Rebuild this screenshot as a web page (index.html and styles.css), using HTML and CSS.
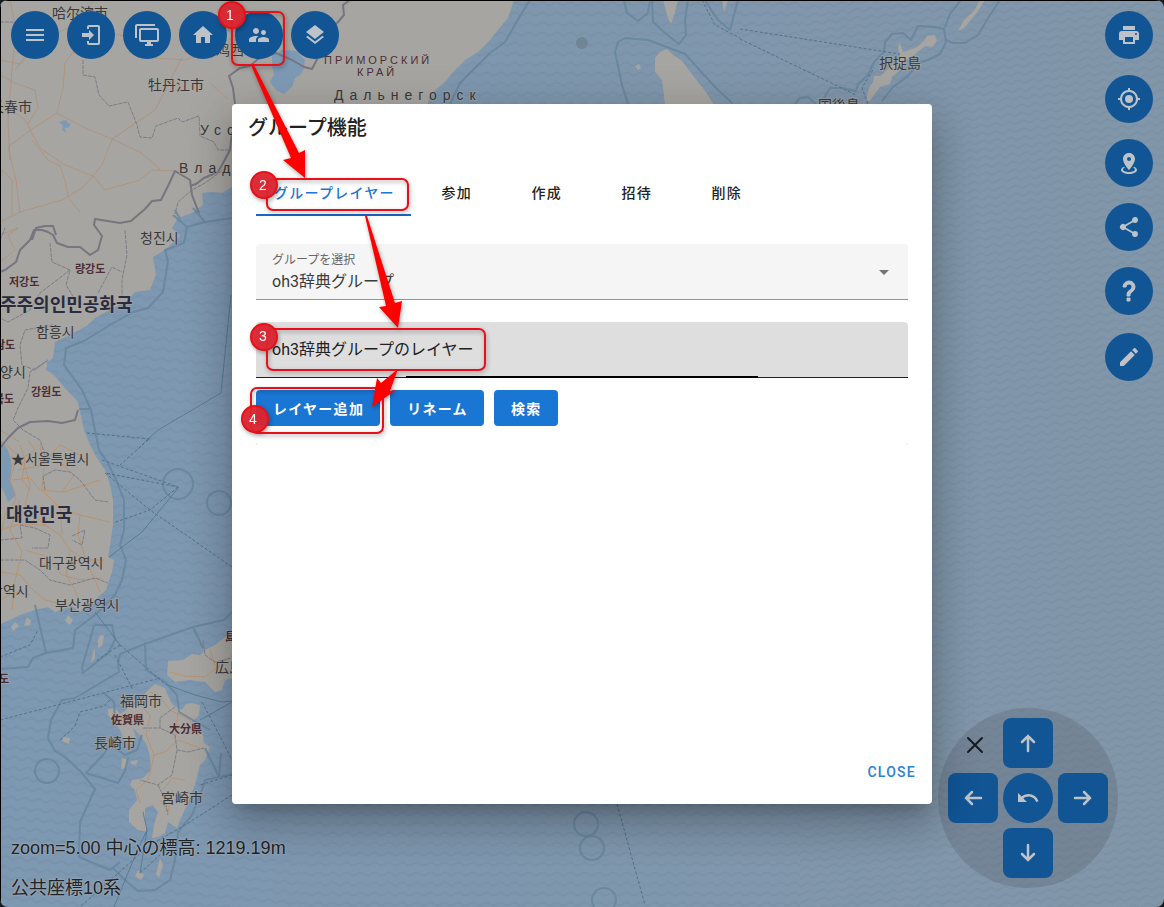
FILE: index.html
```html
<!DOCTYPE html>
<html lang="ja">
<head>
<meta charset="utf-8">
<title>グループ機能</title>
<link rel="stylesheet" href="styles.css">
</head>
<body>
<div class="app">
  <svg class="map" aria-hidden="true">
    <defs>
      <pattern id="waveL" width="14" height="10" patternUnits="userSpaceOnUse" patternTransform="rotate(5)"><path class="wave" d="M0 4q3.500 3 7 0t7 0"/></pattern>
      <pattern id="waveM" width="14" height="10" patternUnits="userSpaceOnUse"><path class="wave" d="M0 4q3.500 3 7 0t7 0"/></pattern>
      <pattern id="waveR" width="14" height="8" patternUnits="userSpaceOnUse" patternTransform="rotate(-6)"><path class="wave" d="M0 4q3.500 3 7 0t7 0"/></pattern>
      <linearGradient id="sea" x1="0" x2="1" y1="0" y2="0"><stop offset="0" stop-color="#7d98b2"/><stop offset=".55" stop-color="#7f97ad"/><stop offset="1" stop-color="#8296a9"/></linearGradient>
    </defs>
    <rect width="100%" height="100%" fill="url(#sea)"/>
    <rect width="300" height="100%" fill="url(#waveL)"/>
    <rect x="300" width="500" height="100%" fill="url(#waveM)"/>
    <rect x="800" width="100%" height="100%" fill="url(#waveR)"/>

    <g class="coast">
      <path d="M514 0 508 18 502 25 490 40 478 52 465 60 453 72 445 82 432 93 425 110 232 187 222 193 212 192 202 193 203 205 192 213 178 218 172 228 180 236 165 250 153 257 156 275 150 290 135 292 128 300 110 310 95 318 88 325 70 335 55 342 53 358 48 362 46 370 54 375 65 388 78 402 84 430 90 445 97 458 105 470 110 485 113 500 113 525 110 545 108 557 114 560 112 572 106 590 95 600 80 612 72 606 55 612 48 607 35 610 20 615 10 620 0 624V0Z"/>
      <path d="M240 626 228 635 215 645 205 650 200 655 192 654 183 660 168 661 167 675 175 682 190 680 205 682 215 692 222 690 225 680 240 676Z"/>
      <path d="M148 690 155 684 165 688 169 698 173 705 182 710 186 704 192 703 200 705 199 715 192 722 203 735 204 743 210 747 205 760 200 765 195 785 187 805 180 820 177 828 168 822 165 833 158 837 152 838 154 825 158 812 153 805 145 808 145 820 147 832 138 830 129 822 129 810 137 800 135 790 130 785 132 780 143 778 151 770 150 757 147 745 140 735 133 728 136 738 131 745 124 740 120 730 114 722 108 715 108 709 115 708 120 714 126 710 130 700 140 700Z"/>
      <path d="M100 635 104 636 102 646 98 648 98 640ZM95 648 95 658 91 663 93 652ZM64 737 70 738 69 744 62 741ZM122 758 128 760 127 768 121 769ZM131 761 138 760 136 765 131 764ZM138 870 144 875 141 880 135 876ZM160 858 163 865 159 878 156 874ZM27 617 31 620 30 625 24 626ZM15 622 19 626 13 631 11 627ZM68 615 73 620 70 625 65 621Z"/>
      <path d="M663 0 668 18 671 24 675 12 678 0ZM722 0 724 12 728 0ZM665 104 662 80 655 72 655 58 660 52 667 49 672 54 682 61 695 78 706 92 716 108ZM635 66 639 64 641 68 638 70Z"/>
      <path d="M898 47 900 43 903 52 909 50 917 47 924 41 927 36 935 35 937 41 932 47 925 46 920 50 914 55 904 61 904 67 892 77 890 84 880 87 874 95 870 101 866 100 869 88 873 82 874 76 880 76 887 70 894 63 900 58ZM980 0 974 11 964 20 958 31 964 28 975 15 980 8 985 0Z"/>
    </g>
    <g class="lake">
      <path d="M272 55 282 50 296 51 305 60 304 69 300 75 295 78 292 87 284 94 276 90 270 82 274 74 272 66Z"/>
      <path d="M59 122 66 120 68 123 71 124 69 127 65 128 66 133 62 130 63 126Z"/>
      <path d="M0 440 8 450 12 465 10 480 16 495 8 502 4 492 0 485ZM46 358 53 366 66 366 63 372 48 370Z"/>
    </g>
    <g class="road">
      <path d="M0 60 20 64 42 42 67 28 91 27 130 38 155 58 185 60 215 50 245 28M91 27 65 63 63 88 57 113 35 127 8 147M57 113 85 128 112 139 102 165 93 176 82 188 62 200 20 212 0 222M112 139 155 110 168 85 182 57M93 176 65 165 40 148 25 120 5 105M93 176 105 190 140 180 152 170 175 171M112 139 140 152 160 169M32 140 48 160 60 166 65 180 68 197 80 212M8 147 16 180 20 212M0 75 15 83 35 90 38 108 28 124M10 0 16 30 12 70 8 120 10 160M0 262 15 250 8 235 18 228 0 235M67 10 80 12 95 0M210 83 228 99M50 42 30 50 15 70M0 168 12 180 12 215"/>
      <path class="road2" d="M0 440 18 455 10 480 16 500 5 515 0 540M10 457 24 463 30 485 25 505 45 525 60 535 70 550 86 560 105 560M18 470 40 466 60 445 80 455M12 480 30 478 40 490 64 492 100 480M40 445 44 466 42 490 60 508 62 535M20 500 10 530 22 552 15 580 12 610M60 508 80 515 110 522M0 572 20 575 33 590 45 600 58 603M25 550 45 556 62 575 80 580 102 578M70 550 66 575 75 590 80 603M5 460 22 458 35 450 28 440M60 462 74 475 62 492M20 445 25 460 22 480 30 490M45 525 20 524 0 530M80 515 78 535 86 560 100 592M0 600 15 592 30 595"/>
      <path class="road2" d="M170 672 184 676 205 677 220 665 232 655M210 650 215 665 225 672M150 692 160 697 170 710 190 720 195 730M140 705 150 715 146 735 154 755 148 780 136 790 140 803M154 755 165 752 178 740 200 748M178 712 175 740M163 790 172 778 185 780M160 800 168 812 172 790M112 713 125 722 143 712M0 430 20 442"/>
    </g>
    <g class="admin">
      <path d="M83 60 83 75 95 77 99 95 109 106 128 102 137 125 140 137 152 138 156 126 178 118 182 122 199 116 200 136 214 142 218 150 230 150M0 22 12 22 25 30 45 28M230 165 205 183 192 190 178 202 175 214M0 240 5 228M50 243 52 262 70 270 66 285 77 303M125 230 127 255 122 280 122 297M98 293 105 280 112 267 122 272M70 270 40 293 30 310 8 322 0 318M53 325 25 330 20 345 22 365 35 370 48 360M45 362 30 372 28 388 18 408 13 420 23 430 40 440 45 455M45 490 43 476 55 470 70 472 80 480 95 500 108 502M0 540 22 538 20 525 35 528 50 535 48 548 32 548M72 536 85 530 82 545 72 540M0 560 25 560 40 570 50 580 70 585 95 578 108 583M203 640 205 655 215 662 232 658M175 707 160 718 160 728 175 735 177 750 188 752 204 748M177 750 172 775 158 785 140 780M143 728 160 728M158 785 165 800 168 815"/>
    </g>
    <g class="border">
      <path d="M350 0 343 5 344 15 338 22 330 30 324 46 312 69 304 67 292 60 276 53 258 59 250 66 240 68 229 76 233 88 235 104M232 132 230 150 222 165 218 172 204 178 196 184 190 186M199 213 192 195 190 180 175 171 168 186 161 200 152 201 145 209 131 221 120 223 95 219 94 225 102 236 98 250 90 255 80 247 68 247 57 243 53 235 48 232 42 230 34 230 30 240 20 250 16 262 5 270 0 272M32 240 36 228 45 226 53 226 56 235M78 410 75 420 62 423 48 421 30 422 18 428 8 438 0 448"/>
    </g>
    <g class="marine">
      <path d="M530 0 520 16 505 42 490 53 475 68 460 83 450 104M173 215 187 227 205 222 232 218M187 227 184 243 165 250 168 261 163 292 148 308 133 312 110 325 84 341 66 348 64 365 72 376 82 390 91 410 99 450 108 463 117 482 124 500 124 530 120 545 126 560 122 580 115 595M79 409 90 409M180 219 175 210M193 208 206 223"/>
      <path d="M115 595 95 615 75 630 73 648 46 653 33 658M35 605 46 653M33 658 28 667 0 669M95 625 112 625 115 640 108 653 83 673 82 667 90 640 94 625M118 663 120 654 145 644 193 627 224 620 232 612M193 627 203 648M145 642 146 670 165 682 177 695 179 712M118 663 119 672 75 698 62 700 51 720 48 738 55 751 65 757 81 772 95 789 80 822 79 857 110 870 120 862M86 773 103 755 118 735M86 773 118 783 125 771 128 758M104 693 114 702 115 722M142 735 137 750 125 755 115 748M179 712 210 730M205 748 219 777 221 753M221 777 232 774M219 777 205 780 202 790 192 815 178 832 175 860 170 880 155 890 138 891 125 880 112 867"/>
      <path d="M624 0 627 13 638 21 648 13 650 0M652 0 653 22 665 33 679 44 686 35 685 20 688 0M628 104 622 85 615 52 618 42 625 38 648 40 685 54 696 66 715 87 733 104M738 0 730 30 718 20 710 8 705 0"/>
      <path d="M961 0 950 14 944 29 935 27 918 26 911 40 903 33 892 34 885 42 884 52 874 62 868 75 858 84 856 91 843 88 830 88 824 98M944 29 946 42 940 54 928 60 918 63 908 76 900 82 893 87 882 101M1000 0 990 15 978 35 965 43 952 43 945 39M795 104 800 98 808 97 816 104"/>
      <circle cx="178" cy="484" r="15"/><circle cx="219" cy="503" r="12"/><circle cx="47" cy="771" r="12"/><circle cx="586" cy="824" r="12"/><circle cx="592" cy="848" r="12"/><circle cx="604" cy="900" r="12"/>
      <path class="ferry-solid" d="M231 295 221 393 158 430 148 439M179 487 142 532 109 557M165 684 195 695 222 702 232 701M200 720 232 702M143 812 147 830 135 856 114 907M147 830 140 873M95 612 120 645"/>
    </g>
    <g class="ferry">
      <path d="M148 439 137 450M87 433 150 439M102 460 178 487 105 473M148 440 120 465M105 473 150 510 232 567M178 487 150 510 113 523M0 720 160 678M120 645 165 684M115 655 133 690 M75 726 80 712 104 706 110 700M60 740 75 726M0 657 30 645 38 630M120 645 96 661M202 702 222 740 232 760M232 775 200 785M232 795 185 825 150 845 80 907M140 873 160 855M617 804 645 905M740 29 900 54M740 39 856 95M868 104 862 88 874 68M702 0 715 25 740 38"/>
    </g>
    <circle cx="582" cy="43" r="6" fill="#708595"/>
    <g class="city">
      <text x="52" y="18">哈尔滨市</text><text x="148" y="90">牡丹江市</text><text x="-10" y="112">长春市</text><text x="216" y="55">鸡西市</text>
      <text x="140" y="243">청진시</text><text x="36" y="337">함흥시</text><text x="0" y="377">양시</text><text x="11" y="464">★서울특별시</text>
      <text x="39" y="568">대구광역시</text><text x="-10" y="596">광역시</text><text x="55" y="610">부산광역시</text>
      <text x="215" y="672">広島市</text><text x="120" y="706">福岡市</text><text x="94" y="748">長崎市</text><text x="161" y="803">宮崎市</text>
      <text x="879" y="68">択捉島</text><text x="818" y="110">国後島</text>
      <text class="wide" x="200" y="135">Усс</text><text class="wide" x="179" y="173">Влад</text><text class="wide" x="334" y="100">Дальнегорск</text>
    </g>
    <g class="region">
      <text x="75" y="273">량강도</text><text x="9" y="286">저강도</text><text x="-5" y="349">남도</text><text x="-6" y="403">북도</text><text x="31" y="396">강원도</text><text x="-1" y="683">도</text>
      <text x="111" y="724">佐賀県</text><text x="169" y="733">大分県</text><text x="225" y="641">島</text>
      <text class="spread" x="324" y="64">ПРИМОРСКИЙ</text><text class="spread" x="357" y="76">КРАЙ</text>
    </g>
    <g class="country"><text x="0" y="311">주주의인민공화국</text><text x="6" y="521">대한민국</text></g>
    <rect class="edge" width="100%" height="1"/><rect class="edge" width="1" height="100%"/>
  </svg>

  <nav class="toolbar">
    <button class="round" aria-label="メニュー"><svg viewBox="0 0 24 24"><path d="M3 6h18v2H3zM3 11h18v2H3zM3 16h18v2H3z"/></svg></button>
    <button class="round" aria-label="ログイン"><svg viewBox="0 0 24 24"><path d="M10 17v-3H3v-4h7V7l5 5-5 5M10 2h9a2 2 0 0 1 2 2v16a2 2 0 0 1-2 2h-9a2 2 0 0 1-2-2v-2h2v2h9V4h-9v2H8V4a2 2 0 0 1 2-2z"/></svg></button>
    <button class="round" aria-label="画面"><svg viewBox="0 0 24 24"><path d="M22 17V7H6v10h16m0-12a2 2 0 0 1 2 2v10a2 2 0 0 1-2 2h-6v2h2v2h-8v-2h2v-2H6a2 2 0 0 1-2-2V7a2 2 0 0 1 2-2h16M2 3v12H0V3a2 2 0 0 1 2-2h18v2H2z"/></svg></button>
    <button class="round" aria-label="ホーム"><svg viewBox="0 0 24 24"><path d="M10 20v-6h4v6h5v-8h3L12 3 2 12h3v8z"/></svg></button>
    <button class="round" aria-label="グループ"><svg viewBox="0 0 24 24"><path d="M16.500 12c1.380 0 2.490-1.120 2.490-2.500S17.880 7 16.500 7 14 8.120 14 9.500s1.120 2.500 2.500 2.500zM9 11c1.660 0 2.990-1.340 2.990-3S10.660 5 9 5 6 6.340 6 8s1.340 3 3 3zm7.500 3c-1.830 0-5.500.920-5.500 2.750V19h11v-2.250c0-1.830-3.670-2.750-5.500-2.750zM9 13c-2.330 0-7 1.170-7 3.500V19h7v-2.250c0-.850.330-2.340 2.370-3.470C10.500 13.100 9.660 13 9 13z"/></svg></button>
    <button class="round" aria-label="レイヤー"><svg viewBox="0 0 24 24"><path d="M12 16l7.360-5.730L21 9l-9-7-9 7 1.630 1.270M12 18.540l-7.380-5.730L3 14.070l9 7 9-7-1.630-1.270z"/></svg></button>
  </nav>

  <aside class="rail">
    <div class="rail-group">
      <button class="round" aria-label="印刷"><svg viewBox="0 0 24 24"><path d="M18 3H6v4h12M19 12a1 1 0 0 1 0-2 1 1 0 0 1 0 2M16 19H8v-5h8M19 8H5a3 3 0 0 0-3 3v6h4v4h12v-4h4v-6a3 3 0 0 0-3-3z"/></svg></button>
      <button class="round" aria-label="現在地"><svg viewBox="0 0 24 24"><path d="M12 8a4 4 0 0 1 0 8 4 4 0 0 1 0-8M3.050 13H1v-2h2.050C3.500 6.830 6.830 3.500 11 3.050V1h2v2.050c4.170.450 7.500 3.780 7.950 7.950H23v2h-2.050c-.450 4.170-3.780 7.500-7.950 7.950V23h-2v-2.050C6.830 20.500 3.500 17.170 3.050 13M12 5a7 7 0 0 0 0 14 7 7 0 0 0 0-14z"/></svg></button>
      <button class="round" aria-label="地点"><svg viewBox="0 0 24 24"><path d="M12 2c3.310 0 6 2.660 6 5.950C18 12.410 12 19 12 19S6 12.410 6 7.950C6 4.660 8.690 2 12 2m0 4a2 2 0 0 0 0 4 2 2 0 0 0 0-4m8 13c0 2.210-3.580 4-8 4s-8-1.790-8-4c0-1.290 1.220-2.440 3.110-3.170l.640.910C6.670 17.190 6 17.810 6 18.500 6 19.880 8.690 21 12 21s6-1.120 6-2.500c0-.690-.670-1.310-1.750-1.760l.640-.910C18.780 16.560 20 17.710 20 19z"/></svg></button>
      <button class="round" aria-label="共有"><svg viewBox="0 0 24 24"><path d="M18 16.080c-.760 0-1.440.300-1.960.770L8.910 12.700c.050-.230.090-.460.090-.700s-.040-.470-.090-.700l7.050-4.110A3 3 0 1 0 15 5c0 .240.040.470.090.700L8.040 9.810a3 3 0 1 0 0 4.380l7.120 4.160c-.050.210-.080.430-.080.650a2.920 2.920 0 1 0 2.920-2.920z"/></svg></button>
      <button class="round" aria-label="ヘルプ"><svg class="bold" viewBox="0 0 24 24"><path d="M10 19h3v3h-3v-3M12 2c5.350.220 7.680 5.620 4.500 9.670-.830 1-2.170 1.660-2.830 2.500C13 15 13 16 13 17h-3c0-1.670 0-3.080.670-4.080.660-1 2-1.590 2.830-2.250C15.920 8.430 15.320 5.260 12 5a3 3 0 0 0-3 3H6a6 6 0 0 1 6-6z"/></svg></button>
    </div>
    <button class="round" aria-label="描画"><svg viewBox="0 0 24 24"><path d="M20.710 7.040c.390-.390.390-1.040 0-1.410l-2.340-2.340c-.370-.390-1.020-.390-1.410 0l-1.840 1.830 3.750 3.750M3 17.250V21h3.750L17.810 9.930l-3.750-3.750z"/></svg></button>
  </aside>

  <div class="pad">
    <button class="pad-close" aria-label="閉じる"><svg viewBox="0 0 24 24"><path d="M5 5l14 14M19 5L5 19"/></svg></button>
    <button class="key up" aria-label="上"><svg viewBox="0 0 24 24"><path d="M12 20V5M6 11l6-6 6 6"/></svg></button>
    <button class="key left" aria-label="左"><svg viewBox="0 0 24 24"><path d="M20 12H5M11 6l-6 6 6 6"/></svg></button>
    <button class="key undo" aria-label="元に戻す"><svg viewBox="0 0 24 24"><path d="M12.500 8c-2.650 0-5.050.990-6.900 2.600L2 7v9h9l-3.620-3.620c1.390-1.160 3.160-1.880 5.120-1.880 3.540 0 6.550 2.310 7.600 5.500l2.370-.780C21.080 11.030 17.150 8 12.500 8z"/></svg></button>
    <button class="key right" aria-label="右"><svg viewBox="0 0 24 24"><path d="M4 12h15M13 6l6 6-6 6"/></svg></button>
    <button class="key down" aria-label="下"><svg viewBox="0 0 24 24"><path d="M12 4v15M6 13l6 6 6-6"/></svg></button>
  </div>

  <div class="status"><span>zoom=5.00 中心の標高: 1219.19m</span><span>公共座標10系</span></div>

  <main class="dialog" role="dialog" aria-labelledby="title">
    <h1 id="title">グループ機能</h1>
    <div class="body">
      <div class="tabs" role="tablist">
        <button class="tab active" role="tab" aria-selected="true">グループレイヤー</button><button class="tab" role="tab">参加</button><button class="tab" role="tab">作成</button><button class="tab" role="tab">招待</button><button class="tab" role="tab">削除</button>
      </div>
      <div class="field">
        <label for="group">グループを選択</label>
        <select id="group"><option>oh3辞典グループ</option></select>
        <svg class="caret" viewBox="0 0 24 24"><path d="M7 10l5 5 5-5z"/></svg>
      </div>
      <div class="field focused"><input type="text" aria-label="レイヤー" value="oh3辞典グループのレイヤー"></div>
      <div class="actions"><button class="btn">レイヤー追加</button><button class="btn">リネーム</button><button class="btn">検索</button></div>
      <div class="list-end"></div>
    </div>
    <footer><button class="close">CLOSE</button></footer>
  </main>

  <svg class="notes">
    <g class="frame"><rect x="232" y="12" width="52" height="53" rx="6"/><rect x="267" y="179" width="141" height="31" rx="6"/><rect x="267" y="329" width="218" height="41" rx="6"/><rect x="251" y="388" width="132" height="45" rx="6"/></g>
    <g class="arrow"><path d="M251 65h3L299 153l6-3v28L283 160l8-2Z"/><path d="M365 216h2L395 303l7-2-4 27-19-21 7-1Z"/><path d="M398 369 390 391l6-1-24 17 5-29 4 5Z"/></g>
    <g class="badge"><circle cx="232" cy="15" r="13"/><circle cx="264" cy="185" r="13"/><circle cx="264" cy="337" r="13"/><circle cx="255" cy="419" r="13"/></g>
    <g class="num"><text x="230" y="20">1</text><text x="263" y="190">2</text><text x="263" y="341">3</text><text x="253" y="424">4</text></g>
  </svg>
</div>
</body>
</html>
```
FILE: styles.css
```css
* { box-sizing: border-box; }
body { margin: 0; background: #17191b; font-family: Roboto, "Noto Sans CJK JP", sans-serif; }
button, input, select { font: inherit; color: inherit; border: 0; margin: 0; padding: 0; background: none; }
button { cursor: pointer; }
.app { position: relative; min-height: 100vh; display: flex; align-items: center; justify-content: center; padding: 24px; overflow: hidden; }

.map { position: absolute; inset: 0; width: 100%; height: 100%; border-radius: 8px; }
.edge { fill: #000; }
.wave { fill: none; stroke: #70869d; stroke-width: 2; stroke-opacity: .3; }
.coast { fill: #a7a5a1; }
.lake { fill: #7d9ab5; }
.road { fill: none; stroke: #b08a70; stroke-width: 1; stroke-opacity: .65; stroke-linejoin: round; }
.road2 { stroke: #bd8a5c; stroke-opacity: .7; }
.admin { fill: none; stroke: #7d7c85; stroke-width: 1; stroke-dasharray: 4 1; }
.border { fill: none; stroke: #77757f; stroke-width: 2; stroke-linejoin: round; }
.marine { fill: none; stroke: #66859c; stroke-width: 2; stroke-linejoin: round; stroke-opacity: .85; }
.marine .ferry-solid { stroke: #4f7890; stroke-width: 1; }
.ferry { fill: none; stroke: #4f7289; stroke-width: 1; stroke-dasharray: 3 2; }
.map text { font-family: "Noto Sans CJK JP", sans-serif; paint-order: stroke; stroke: #aaa9a5; stroke-opacity: .5; stroke-width: 2px; }
.city text { font-size: 14px; fill: #38383a; }
.city .wide { letter-spacing: 6px; font-family: "Liberation Sans", sans-serif; }
.region text { font-size: 11px; font-weight: 700; fill: #4d2c35; }
.region .spread { letter-spacing: 3px; font-family: "Liberation Sans", sans-serif; font-weight: 400; }
.country text { font-size: 18px; font-weight: 700; fill: #2b2b40; }

.round { display: grid; place-items: center; width: 48px; height: 48px; border-radius: 50%; background: #115595; }
.round svg { width: 24px; height: 24px; fill: #bdc3c9; }
.round .bold { stroke: #bdc3c9; stroke-width: 1; }
.toolbar { position: absolute; top: 11px; left: 11px; display: flex; gap: 8px; }
.rail { position: absolute; top: 11px; right: 11px; display: grid; gap: 18px; }
.rail-group { display: grid; gap: 16px; }

.pad { position: absolute; right: 46px; bottom: 19px; display: grid; grid-template: repeat(3, 50px) / repeat(3, 50px); grid-template-areas: "x up ." "left undo right" ". down ."; gap: 5px; padding: 10px; border-radius: 50%; background: rgba(80, 90, 100, .27); }
.key { display: grid; place-items: center; border-radius: 8px; background: #115595; }
.key svg, .pad-close svg { width: 24px; height: 24px; fill: none; stroke: #bdc3c9; stroke-width: 2.500; stroke-linecap: round; }
.pad-close { grid-area: x; display: grid; place-items: center; padding: 4px 0 0 4px; }
.pad-close svg { stroke: #151b20; stroke-width: 2; }
.up { grid-area: up; }
.left { grid-area: left; }
.right { grid-area: right; }
.down { grid-area: down; }
.undo { grid-area: undo; border-radius: 50%; }
.undo svg { fill: #bdc3c9; stroke: none; }

.status { position: absolute; left: 11px; bottom: 5px; display: grid; gap: 12px; font: 18px/28px "Liberation Sans", "Noto Sans CJK JP", sans-serif; color: #202326; text-shadow: 0 0 2px #a9b2ba, 0 0 2px #a9b2ba; }

.dialog { position: relative; width: 100%; max-width: 700px; min-height: 700px; display: flex; flex-direction: column; border-radius: 4px; background: #fff; color: #212121; box-shadow: 0 11px 15px -7px rgba(0,0,0,.2), 0 24px 38px 3px rgba(0,0,0,.14), 0 9px 46px 8px rgba(0,0,0,.12); }
h1 { margin: 0; padding: 8px 16px; font-size: 20px; line-height: 32px; font-weight: 500; }
.body { flex: 1; padding: 16px 24px; }
.tabs { display: flex; height: 48px; margin-bottom: 28px; }
.tab { min-width: 90px; padding: 2px 16px 0 18px; font-size: 14px; font-weight: 500; letter-spacing: 0.09em; border-bottom: 2px solid transparent; }
.tab.active { color: #1976d2; border-color: #1867c0; }
.field { position: relative; height: 56px; margin-bottom: 22px; border-bottom: 1px solid #949494; border-radius: 4px 4px 0 0; background: #f5f5f5; }
.field label { position: absolute; top: 6px; left: 16px; font-size: 12px; line-height: 20px; color: #666; }
.field select, .field input { display: block; width: 100%; height: 100%; padding: 0 16px 2px; font-size: 16px; outline: 0; appearance: none; }
.field select { padding: 20px 16px 0; color: #3c3c3c; }
.caret { position: absolute; top: 16px; right: 12px; width: 24px; height: 24px; fill: #757575; pointer-events: none; }
.focused { margin-bottom: 12px; border-color: #212121; background: #dedede; }
.focused::after { content: ""; position: absolute; left: 23%; right: 23%; bottom: -1px; height: 2px; background: #000; }
.actions { display: flex; gap: 10px; }
.btn { height: 36px; min-width: 64px; padding: 0 16px 0 17px; border-radius: 4px; background: #1976d2; color: #fff; font-size: 14px; font-weight: 700; letter-spacing: 0.09em; white-space: nowrap; }
.list-end { height: 2px; margin-top: 17px; border: solid #ddd; border-width: 0 1px; border-radius: 0 0 2px 2px; }
footer { display: flex; justify-content: flex-end; padding: 14px 8px; }
.close { min-width: 64px; height: 36px; padding: 0 8px; color: #2a81d2; font-size: 14px; font-weight: 500; letter-spacing: 0.09em; }

.notes { position: absolute; inset: 0; width: 100%; height: 100%; pointer-events: none; filter: drop-shadow(1px 2px 2px rgba(0,0,0,.35)); }
.frame { fill: none; stroke: #e80f18; stroke-width: 2; }
.arrow { fill: #f00; }
.badge { fill: #dd2530; fill-opacity: .94; stroke: #e81018; stroke-width: 2; }
.num { fill: #fff; font: 14px "Liberation Sans", sans-serif; text-anchor: middle; }
```
